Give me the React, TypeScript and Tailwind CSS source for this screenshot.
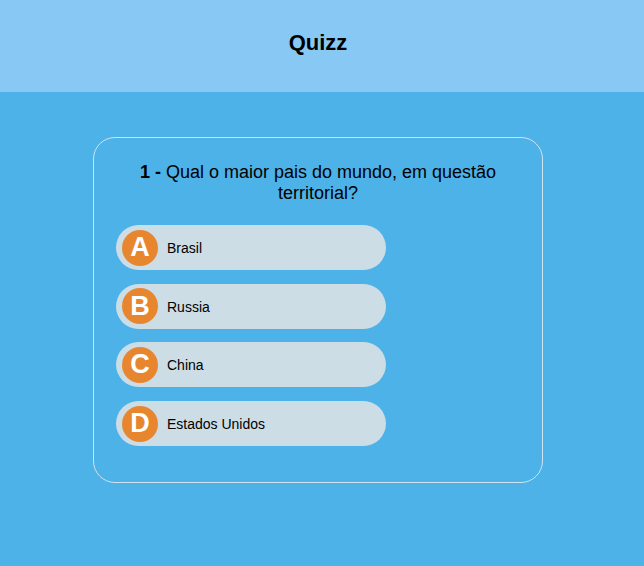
import React from "react";

const options = [
  { l: "A", t: "Brasil" },
  { l: "B", t: "Russia" },
  { l: "C", t: "China" },
  { l: "D", t: "Estados Unidos" },
];

export default function App() {
  return (
    <div className="min-h-[566px] bg-[#4db2e8]" style={{ fontFamily: '"Liberation Sans", Arial, sans-serif' }}>
      <header className="h-[92px] bg-[#87c8f5] flex items-center justify-center pr-[8px]">
        <h1 className="text-[22px] font-bold text-black leading-none -mt-[6px]">Quizz</h1>
      </header>
      <div className="flex justify-center pt-[45px] pr-[8px]">
        <div className="w-[450px] h-[346px] border border-[#cfe3f0] rounded-[22px] pt-[24px] px-[22px]">
          <p className="text-[18px] leading-[21px] text-black text-center px-[20px]">
            <b>1 -</b> Qual o maior pais do mundo, em questão territorial?
          </p>
          <div className="mt-[21px] flex flex-col gap-[13.7px]">
            {options.map((o) => (
              <div key={o.l} className="w-[270px] h-[45px] rounded-full bg-[#cddde6] flex items-center pl-[6px]">
                <div className="w-[36px] h-[36px] rounded-full bg-[#e8862f] flex items-center justify-center text-white font-bold text-[27px] leading-none">
                  {o.l}
                </div>
                <span className="ml-[9px] pt-[2px] text-[14px] text-black">{o.t}</span>
              </div>
            ))}
          </div>
        </div>
      </div>
    </div>
  );
}
